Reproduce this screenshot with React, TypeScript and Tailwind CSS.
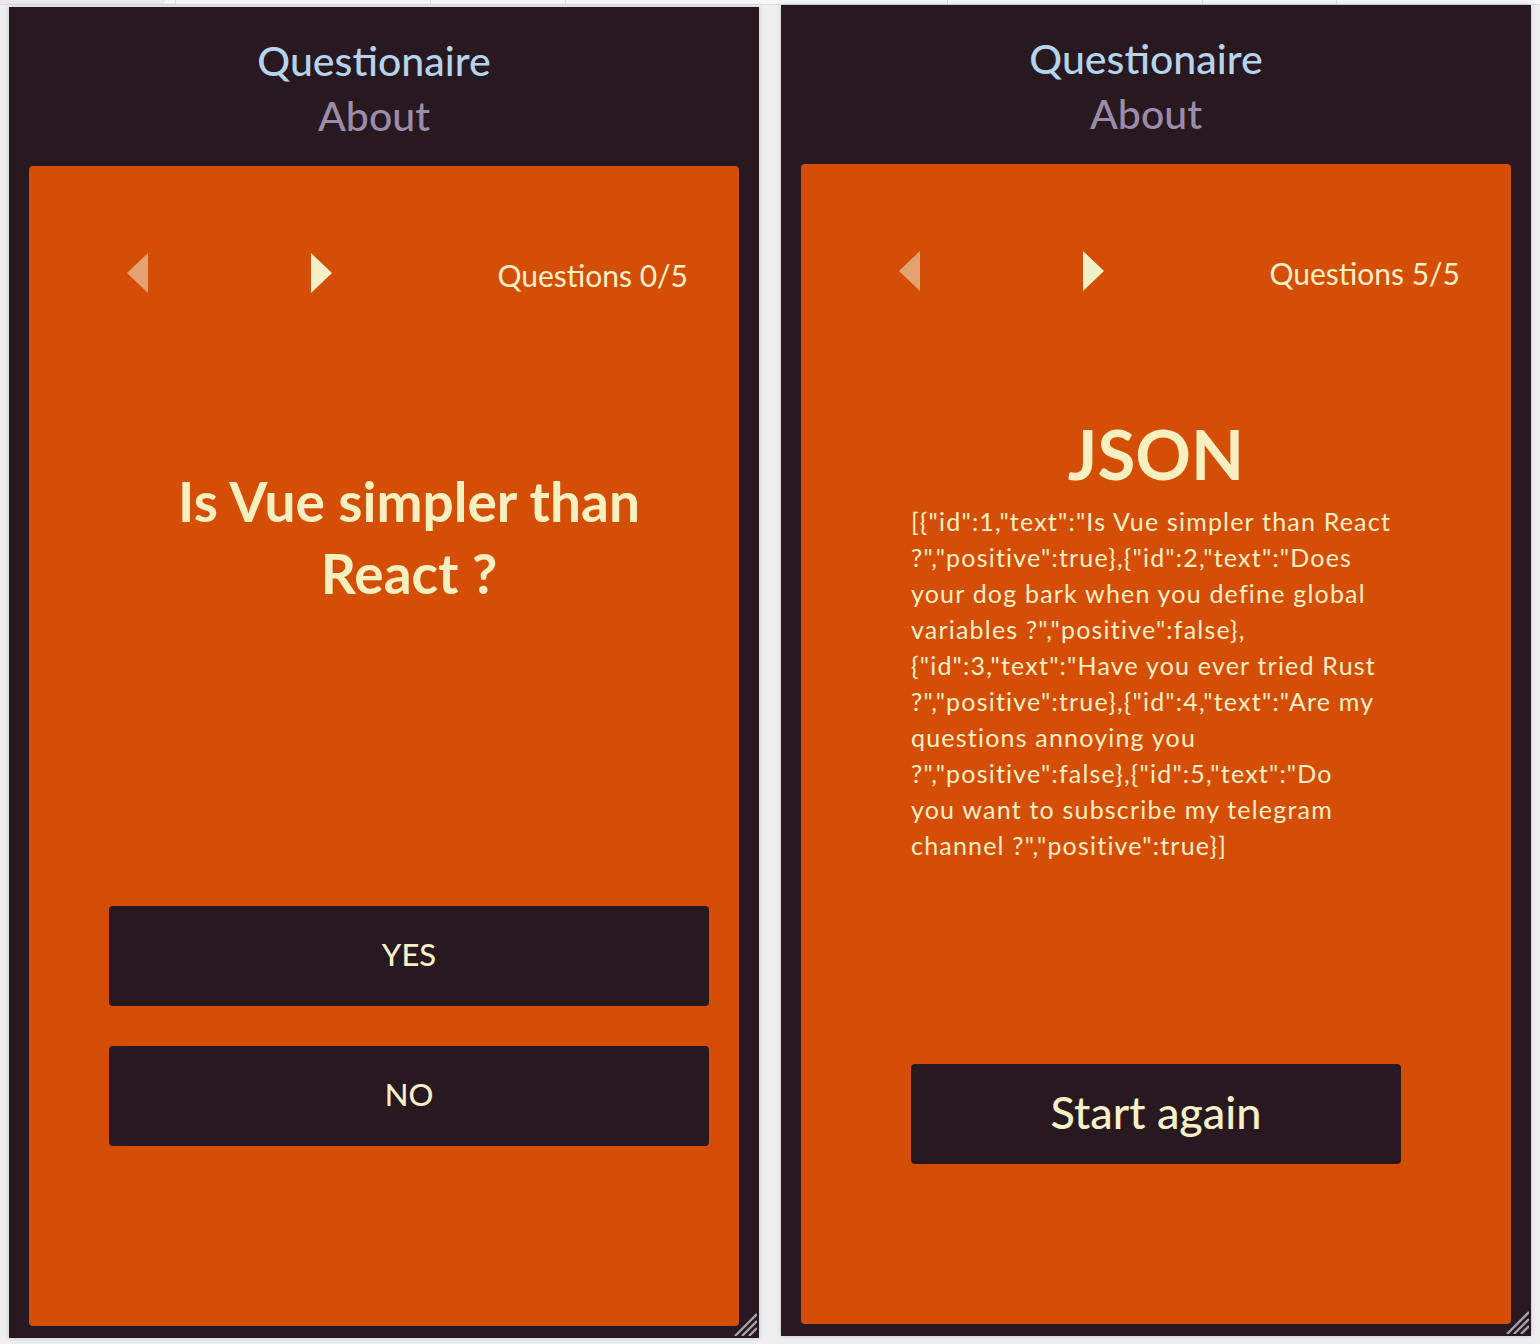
import { useState } from "react";

type Question = {
  id: number;
  text: string;
  positive: boolean;
};

const questions: Question[] = [
  { id: 1, text: "Is Vue simpler than React ?", positive: true },
  { id: 2, text: "Does your dog bark when you define global variables ?", positive: false },
  { id: 3, text: "Have you ever tried Rust ?", positive: true },
  { id: 4, text: "Are my questions annoying you ?", positive: false },
  { id: 5, text: "Do you want to subscribe my telegram channel ?", positive: true },
];

// wrapped by hand so the lines break where the original does
const jsonLines = [
  '[{"id":1,"text":"Is Vue simpler than React',
  '?","positive":true},{"id":2,"text":"Does',
  "your dog bark when you define global",
  'variables ?","positive":false},',
  '{"id":3,"text":"Have you ever tried Rust',
  '?","positive":true},{"id":4,"text":"Are my',
  "questions annoying you",
  '?","positive":false},{"id":5,"text":"Do',
  "you want to subscribe my telegram",
  'channel ?","positive":true}]',
];

const font = { fontFamily: "Lato, 'Open Sans', sans-serif" };

function Arrow({ dir, disabled }: { dir: "left" | "right"; disabled?: boolean }) {
  return (
    <svg width="21" height="40" viewBox="0 0 21 40" className="shrink-0">
      <polygon
        points={dir === "left" ? "21,0 21,40 0,20" : "0,0 0,40 21,20"}
        fill={disabled ? "#e4a171" : "#f2f0c6"}
      />
    </svg>
  );
}

function Grip() {
  return (
    <svg width="24" height="24" viewBox="0 0 24 24" className="absolute bottom-[2px] right-[2px]">
      <path d="M24 2 L2 24 M24 9 L9 24 M24 16 L16 24" stroke="#a3a3a6" strokeWidth="2.4" />
    </svg>
  );
}

function Header() {
  return (
    <div className="flex flex-col items-center pr-[20px] pt-[26px] pb-[23px] text-[41px] font-medium leading-[55px]">
      <a className="text-[#b4d4ee]">Questionaire</a>
      <a className="text-[#9c8caa]">About</a>
    </div>
  );
}

function Nav({ count }: { count: number }) {
  return (
    <div className="mt-[87px] flex h-[40px] items-center pl-[98px] pr-[51px]">
      <Arrow dir="left" disabled />
      <div className="ml-[163px]">
        <Arrow dir="right" />
      </div>
      <span className="ml-auto pt-[3px] text-[30px] leading-[40px] text-[#f5f0c8]">
        Questions {count}/5
      </span>
    </div>
  );
}

function Panel({ top, children }: { top: string; children: React.ReactNode }) {
  return (
    <div
      className={`relative flex h-[1331px] w-[750px] flex-col bg-[#28181f] px-[20px] pb-[12px] shadow-[0_0_5px_rgba(0,0,0,0.18)] ${top}`}
    >
      <Header />
      <div className="flex flex-1 flex-col rounded-[4px] bg-[#d54e07]">{children}</div>
      <Grip />
    </div>
  );
}

function QuestionCard() {
  const [index] = useState(0);
  const q = questions[index];
  const words = q.text.split(" ");

  return (
    <>
      <Nav count={index} />
      <h2 className="ml-[80px] mr-[30px] mt-[172px] text-center text-[55px] font-bold leading-[72px] text-[#f6efbf]">
        {words.slice(0, 4).join(" ")}
        <br />
        {words.slice(4).join(" ")}
      </h2>
      <div className="ml-[80px] mr-[30px] mt-[297px] flex flex-col gap-[40px]">
        {["YES", "NO"].map((label) => (
          <button
            key={label}
            className="h-[100px] rounded-[4px] bg-[#28181f] pb-[4px] text-[31px] font-medium text-[#f5f0c8]"
          >
            {label}
          </button>
        ))}
      </div>
    </>
  );
}

function ResultCard() {
  return (
    <>
      <Nav count={questions.length} />
      <h1 className="mt-[125px] text-center text-[69px] font-bold leading-[76px] text-[#f6efbf]">JSON</h1>
      <div className="mx-[110px] mt-[11px] text-[25px] leading-[36px] tracking-[1.2px] text-[#f6efc8]">
        {jsonLines.map((line, i) => (
          <div key={i} className="whitespace-nowrap">
            {line}
          </div>
        ))}
      </div>
      <button className="mx-[110px] mt-[201px] h-[100px] rounded-[4px] bg-[#28181f] pb-[3px] text-[45px] font-medium text-[#f5f0c8]">
        Start again
      </button>
    </>
  );
}

export default function App() {
  return (
    <div className="flex h-[1344px] w-[1540px] flex-col overflow-hidden bg-[#efeff0]" style={font}>
      <div className="flex h-[5px] shrink-0 border-b border-[#dcdcde] bg-[#f7f7f7]">
        <div className="w-[165px] rounded-br-[6px] bg-[#e9e9eb]" />
        <div className="w-[10px]" />
        <div className="w-[255px] border-l border-[#dedede]" />
        <div className="w-[135px] border-l border-[#dedede]" />
        <div className="w-[382px] border-l border-[#dedede]" />
        <div className="w-[255px] border-l border-[#dedede]" />
        <div className="w-[134px] border-l border-[#dedede]" />
        <div className="flex-1 border-l border-[#dedede]" />
      </div>
      <div className="flex items-start gap-[22px] pl-[9px]">
        <Panel top="mt-[2px]">
          <QuestionCard />
        </Panel>
        <Panel top="mt-0 w-[749px]">
          <ResultCard />
        </Panel>
      </div>
    </div>
  );
}
